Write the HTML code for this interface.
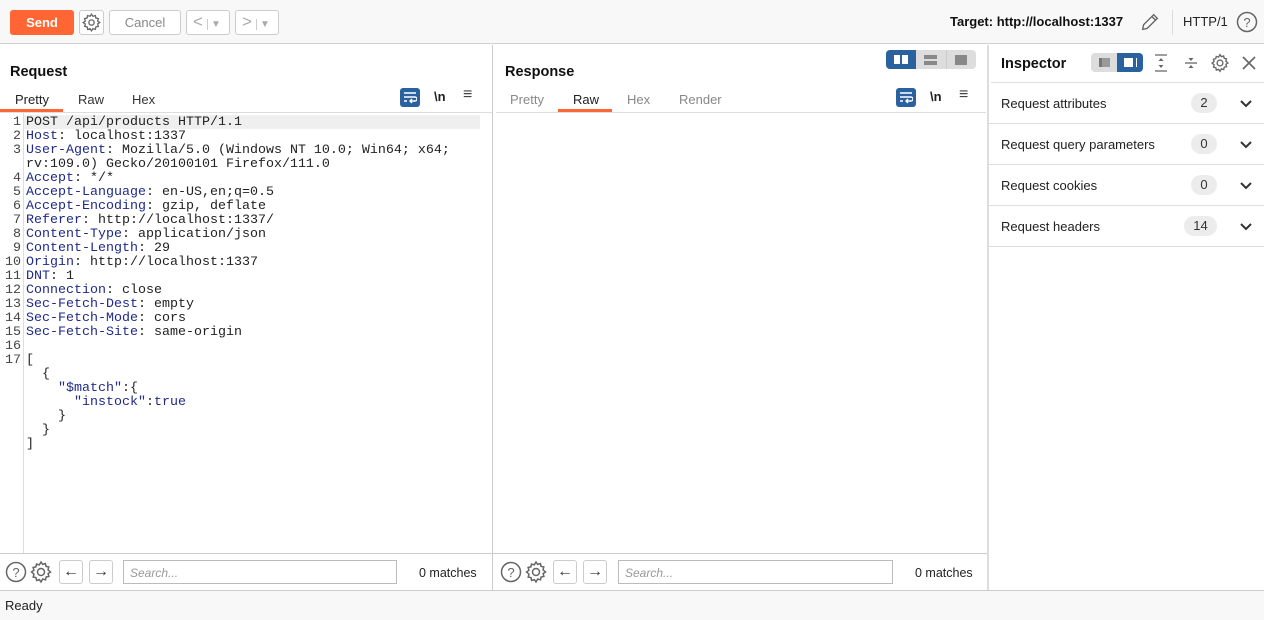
<!DOCTYPE html>
<html><head><meta charset="utf-8"><style>
*{box-sizing:border-box;margin:0;padding:0}
body{width:1264px;height:620px;overflow:hidden;background:#fff;font-family:"Liberation Sans",sans-serif;font-size:13px;color:#222;position:relative}
.a{position:absolute}
.btn{position:absolute;border:1px solid #ccc;border-radius:3px;background:#fff}
.tab{position:absolute;font-size:13px}
.mono{font-family:"Liberation Mono",monospace;font-size:13.33px;line-height:14px;white-space:pre}
.k{color:#1f2a8a}
.ins{position:absolute;left:989px;width:275px;height:41px;border-bottom:1px solid #ddd}
.ins span.t{position:absolute;left:12px;top:13px;font-size:13px;color:#222}
.ins span.c{position:absolute;top:10px;height:20px;border-radius:10px;background:#ececec;font-size:13px;text-align:center;line-height:20px;color:#333}
.chev{position:absolute;left:251px;top:17px}
.srch{position:absolute;height:24px;border:1px solid #bbb;background:#fff;font-style:italic;color:#999;font-size:12px;padding:5px 6px}
</style></head><body>
<div class="a" style="left:0;top:0;width:1264px;height:44px;background:#f8f8f8;border-bottom:1px solid #d0d0d0"></div>
<div class="a" style="left:10px;top:10px;width:64px;height:25px;background:#ff6633;border-radius:3px;color:#fff;font-weight:bold;text-align:center;line-height:25px;font-size:13px">Send</div>
<div class="btn" style="left:79px;top:10px;width:25px;height:25px"></div>
<svg class="a" style="left:81px;top:12px" width="21" height="21" viewBox="0 0 24 24" fill="none" stroke="#666" stroke-width="1.5"><circle cx="12" cy="12" r="3"/><path d="M12 2.5l1.6 2.4 2.8-.8.6 2.8 2.8.6-.8 2.8 2.4 1.7-2.4 1.6.8 2.8-2.8.6-.6 2.8-2.8-.8L12 21.5l-1.6-2.4-2.8.8-.6-2.8-2.8-.6.8-2.8L2.5 12l2.4-1.7-.8-2.8 2.8-.6.6-2.8 2.8.8z"/></svg>
<div class="btn" style="left:109px;top:10px;width:72px;height:25px;color:#888;text-align:center;line-height:23px">Cancel</div>
<div class="btn" style="left:186px;top:10px;width:44px;height:25px;color:#aaa;font-size:17px;line-height:21px;padding-left:6px">&lt;<span style="font-size:10px;border-left:1px solid #ccc;padding-left:3px;margin-left:4px">▼</span></div>
<div class="btn" style="left:235px;top:10px;width:44px;height:25px;color:#aaa;font-size:17px;line-height:21px;padding-left:6px">&gt;<span style="font-size:10px;border-left:1px solid #ccc;padding-left:3px;margin-left:4px">▼</span></div>
<div class="a" style="left:950px;top:14px;font-weight:bold;font-size:13px;color:#111">Target: http://localhost:1337</div>
<svg class="a" style="left:1139px;top:11px" width="22" height="22" viewBox="0 0 24 24" fill="none" stroke="#666" stroke-width="1.5"><path d="M4 20l1-5L16 4l4 4L9 19z M14 6l4 4"/></svg>
<div class="a" style="left:1172px;top:10px;width:1px;height:25px;background:#ddd"></div>
<div class="a" style="left:1183px;top:14px;font-size:13px;color:#222">HTTP/1</div>
<svg class="a" style="left:1236px;top:11px" width="22" height="22" viewBox="0 0 22 22" fill="none" stroke="#666" stroke-width="1.5"><circle cx="11" cy="11" r="9.5"/><text x="11" y="16" font-size="13" text-anchor="middle" fill="#666" stroke="none" font-family="Liberation Sans">?</text></svg>

<div class="a" style="left:492px;top:45px;width:1px;height:546px;background:#ccc"></div>
<div class="a" style="left:987px;top:45px;width:2px;height:546px;background:#ddd"></div>

<div class="a" style="left:10px;top:64px;font-weight:bold;font-size:14.5px;color:#111">Request</div>
<div class="tab" style="left:15px;top:92px;color:#222">Pretty</div>
<div class="a" style="left:0;top:109px;width:63px;height:3px;background:#ff6633"></div>
<div class="tab" style="left:78px;top:92px;color:#333">Raw</div>
<div class="tab" style="left:132px;top:92px;color:#333">Hex</div>
<div class="a" style="left:400px;top:88px;width:20px;height:19px;background:#2a62a0;border-radius:3px"></div>
<svg class="a" style="left:403px;top:91px" width="14" height="13" viewBox="0 0 14 13" fill="none" stroke="#fff" stroke-width="1.4"><path d="M1 2h12M1 6h11a2 2 0 010 4H7M9 8l-2 2 2 2M1 10h3"/></svg>
<div class="a" style="left:434px;top:89px;font-weight:bold;font-size:13px;color:#222">\n</div>
<div class="a" style="left:463px;top:86px;font-size:16px;color:#444">≡</div>
<div class="a" style="left:0;top:112px;width:492px;height:1px;background:#ddd"></div>
<div class="a" style="left:23px;top:113px;width:1px;height:440px;background:#ddd"></div>
<div class="a" style="left:24px;top:115px;width:456px;height:14px;background:#efefef"></div>
<div class="a mono" style="left:0;top:116px;width:21px;text-align:right;color:#444">1
2
3

4
5
6
7
8
9
10
11
12
13
14
15
16
17</div>
<div class="a mono" style="left:26px;top:116px;color:#222">POST /api/products HTTP/1.1
<span class="k">Host</span>: localhost:1337
<span class="k">User-Agent</span>: Mozilla/5.0 (Windows NT 10.0; Win64; x64;
rv:109.0) Gecko/20100101 Firefox/111.0
<span class="k">Accept</span>: */*
<span class="k">Accept-Language</span>: en-US,en;q=0.5
<span class="k">Accept-Encoding</span>: gzip, deflate
<span class="k">Referer</span>: http://localhost:1337/
<span class="k">Content-Type</span>: application/json
<span class="k">Content-Length</span>: 29
<span class="k">Origin</span>: http://localhost:1337
<span class="k">DNT</span>: 1
<span class="k">Connection</span>: close
<span class="k">Sec-Fetch-Dest</span>: empty
<span class="k">Sec-Fetch-Mode</span>: cors
<span class="k">Sec-Fetch-Site</span>: same-origin

[
  {
    <span class="k">"$match"</span>:{
      <span class="k">"instock"</span>:<span class="k">true</span>
    }
  }
]</div>

<div class="a" style="left:0;top:553px;width:492px;height:1px;background:#ccc"></div>
<div class="a" style="left:493px;top:553px;width:494px;height:1px;background:#ccc"></div>
<div class="a" style="left:0;top:590px;width:1264px;height:30px;background:#f8f8f8;border-top:1px solid #ccc"></div>
<div class="a" style="left:5px;top:598px;font-size:13px;color:#222">Ready</div>

<svg class="a" style="left:5px;top:561px" width="22" height="22" viewBox="0 0 22 22" fill="none" stroke="#666" stroke-width="1.5"><circle cx="11" cy="11" r="9.5"/><text x="11" y="16" font-size="13" text-anchor="middle" fill="#666" stroke="none" font-family="Liberation Sans">?</text></svg>
<svg class="a" style="left:29px;top:560px" width="24" height="24" viewBox="0 0 24 24" fill="none" stroke="#666" stroke-width="1.5"><circle cx="12" cy="12" r="3.5"/><path d="M12 2l1.6 2.4 2.8-.8.6 2.8 2.8.6-.8 2.8L21.5 12l-2.4 1.6.8 2.8-2.8.6-.6 2.8-2.8-.8L12 22l-1.6-2.4-2.8.8-.6-2.8-2.8-.6.8-2.8L2.5 12l2.4-1.7-.8-2.8 2.8-.6.6-2.8 2.8.8z"/></svg>
<div class="btn" style="left:59px;top:560px;width:24px;height:24px;text-align:center;line-height:21px;font-size:16px;color:#333">←</div>
<div class="btn" style="left:89px;top:560px;width:24px;height:24px;text-align:center;line-height:21px;font-size:16px;color:#333">→</div>
<div class="srch" style="left:123px;top:560px;width:274px">Search...</div>
<div class="a" style="left:419px;top:566px;font-size:12.5px;color:#222">0 matches</div>

<div class="a" style="left:505px;top:64px;font-weight:bold;font-size:14.5px;color:#111">Response</div>
<div class="a" style="left:886px;top:50px;width:90px;height:19px;background:#ddd;border-radius:4px"></div>
<div class="a" style="left:886px;top:50px;width:30px;height:19px;background:#2a62a0;border-radius:4px 0 0 4px"></div>
<div class="a" style="left:894px;top:55px;width:6px;height:9px;background:#fff"></div>
<div class="a" style="left:902px;top:55px;width:6px;height:9px;background:#fff"></div>
<div class="a" style="left:946px;top:50px;width:1px;height:19px;background:#ccc"></div>
<div class="a" style="left:924px;top:55px;width:13px;height:4px;background:#888"></div>
<div class="a" style="left:924px;top:61px;width:13px;height:4px;background:#888"></div>
<div class="a" style="left:955px;top:55px;width:12px;height:10px;background:#888"></div>
<div class="tab" style="left:510px;top:92px;color:#888">Pretty</div>
<div class="tab" style="left:573px;top:92px;color:#222">Raw</div>
<div class="a" style="left:558px;top:109px;width:54px;height:3px;background:#ff6633"></div>
<div class="tab" style="left:627px;top:92px;color:#888">Hex</div>
<div class="tab" style="left:679px;top:92px;color:#888">Render</div>
<div class="a" style="left:896px;top:88px;width:20px;height:19px;background:#2a62a0;border-radius:3px"></div>
<svg class="a" style="left:899px;top:91px" width="14" height="13" viewBox="0 0 14 13" fill="none" stroke="#fff" stroke-width="1.4"><path d="M1 2h12M1 6h11a2 2 0 010 4H7M9 8l-2 2 2 2M1 10h3"/></svg>
<div class="a" style="left:930px;top:89px;font-weight:bold;font-size:13px;color:#222">\n</div>
<div class="a" style="left:959px;top:86px;font-size:16px;color:#444">≡</div>
<div class="a" style="left:496px;top:112px;width:490px;height:1px;background:#ddd"></div>

<svg class="a" style="left:500px;top:561px" width="22" height="22" viewBox="0 0 22 22" fill="none" stroke="#666" stroke-width="1.5"><circle cx="11" cy="11" r="9.5"/><text x="11" y="16" font-size="13" text-anchor="middle" fill="#666" stroke="none" font-family="Liberation Sans">?</text></svg>
<svg class="a" style="left:524px;top:560px" width="24" height="24" viewBox="0 0 24 24" fill="none" stroke="#666" stroke-width="1.5"><circle cx="12" cy="12" r="3.5"/><path d="M12 2l1.6 2.4 2.8-.8.6 2.8 2.8.6-.8 2.8L21.5 12l-2.4 1.6.8 2.8-2.8.6-.6 2.8-2.8-.8L12 22l-1.6-2.4-2.8.8-.6-2.8-2.8-.6.8-2.8L2.5 12l2.4-1.7-.8-2.8 2.8-.6.6-2.8 2.8.8z"/></svg>
<div class="btn" style="left:553px;top:560px;width:24px;height:24px;text-align:center;line-height:21px;font-size:16px;color:#333">←</div>
<div class="btn" style="left:583px;top:560px;width:24px;height:24px;text-align:center;line-height:21px;font-size:16px;color:#333">→</div>
<div class="srch" style="left:618px;top:560px;width:275px">Search...</div>
<div class="a" style="left:915px;top:566px;font-size:12.5px;color:#222">0 matches</div>

<div class="a" style="left:1001px;top:56px;font-weight:bold;font-size:14.5px;color:#111">Inspector</div>
<div class="a" style="left:1091px;top:53px;width:52px;height:19px;background:#ddd;border-radius:4px"></div>
<div class="a" style="left:1117px;top:53px;width:26px;height:19px;background:#2a62a0;border-radius:0 4px 4px 0"></div>
<div class="a" style="left:1099px;top:58px;width:11px;height:9px;border-left:3px solid #777;background:#999"></div>
<div class="a" style="left:1124px;top:58px;width:12px;height:9px;background:#fff;border-right:3px solid #2a62a0;box-shadow:1px 0 0 #fff"></div>
<svg class="a" style="left:1153px;top:54px" width="16" height="18" viewBox="0 0 16 18" stroke="#666" stroke-width="1.3" fill="#666"><path d="M2 1h12M2 17h12" fill="none"/><path d="M8 4l-2.5 3h5z M8 14l-2.5-3h5z" stroke="none"/></svg>
<svg class="a" style="left:1183px;top:54px" width="16" height="18" viewBox="0 0 16 18" stroke="#666" stroke-width="1.3" fill="#666"><path d="M2 9h12" fill="none"/><path d="M8 7l-2.5-3h5z M8 11l-2.5 3h5z" stroke="none"/></svg>
<svg class="a" style="left:1210px;top:53px" width="20" height="20" viewBox="0 0 24 24" fill="none" stroke="#666" stroke-width="1.6"><circle cx="12" cy="12" r="3.5"/><path d="M12 2l1.6 2.4 2.8-.8.6 2.8 2.8.6-.8 2.8L21.5 12l-2.4 1.6.8 2.8-2.8.6-.6 2.8-2.8-.8L12 22l-1.6-2.4-2.8.8-.6-2.8-2.8-.6.8-2.8L2.5 12l2.4-1.7-.8-2.8 2.8-.6.6-2.8 2.8.8z"/></svg>
<svg class="a" style="left:1241px;top:55px" width="16" height="16" viewBox="0 0 16 16" stroke="#666" stroke-width="1.6"><path d="M2 2l12 12M14 2L2 14"/></svg>
<div class="a" style="left:991px;top:82px;width:273px;height:1px;background:#ddd"></div>

<div class="ins" style="top:83px"><span class="t">Request attributes</span><span class="c" style="left:202px;width:26px">2</span><svg class="chev" width="12" height="8" viewBox="0 0 12 8" fill="none" stroke="#333" stroke-width="2"><path d="M1 1l5 5 5-5"/></svg></div>
<div class="ins" style="top:124px"><span class="t">Request query parameters</span><span class="c" style="left:202px;width:26px">0</span><svg class="chev" width="12" height="8" viewBox="0 0 12 8" fill="none" stroke="#333" stroke-width="2"><path d="M1 1l5 5 5-5"/></svg></div>
<div class="ins" style="top:165px"><span class="t">Request cookies</span><span class="c" style="left:202px;width:26px">0</span><svg class="chev" width="12" height="8" viewBox="0 0 12 8" fill="none" stroke="#333" stroke-width="2"><path d="M1 1l5 5 5-5"/></svg></div>
<div class="ins" style="top:206px"><span class="t">Request headers</span><span class="c" style="left:195px;width:33px">14</span><svg class="chev" width="12" height="8" viewBox="0 0 12 8" fill="none" stroke="#333" stroke-width="2"><path d="M1 1l5 5 5-5"/></svg></div>
</body></html>
